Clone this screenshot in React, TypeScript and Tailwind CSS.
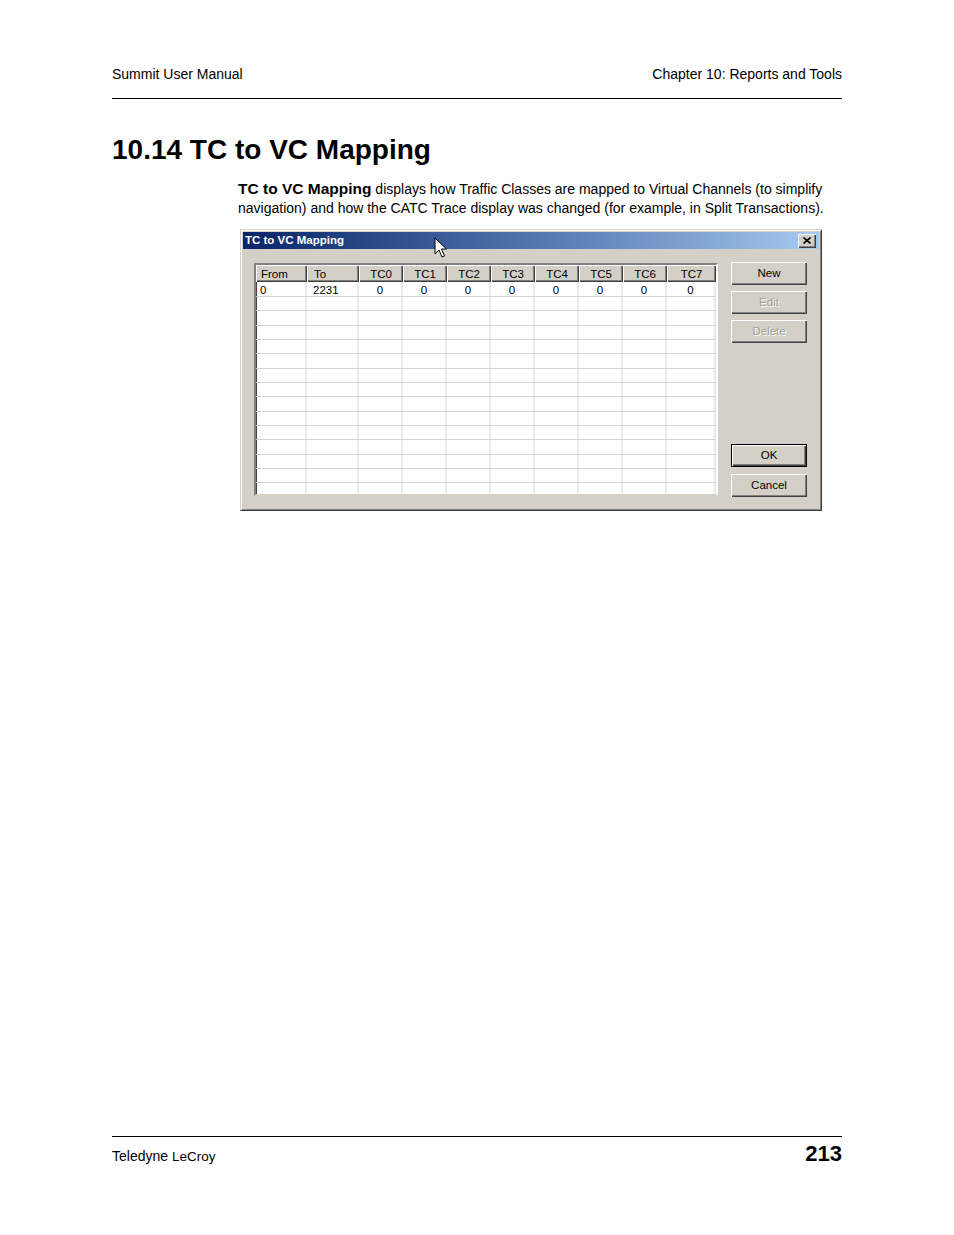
import React from "react";

const cols = [
  { label: "From", w: "w-[51px]", align: "text-left pl-[5px]", cell: "text-left pl-[4px]" },
  { label: "To", w: "w-[52px]", align: "text-left pl-[7px]", cell: "text-left pl-[6px]" },
  { label: "TC0", w: "w-[44px]", align: "text-center", cell: "text-center" },
  { label: "TC1", w: "w-[44px]", align: "text-center", cell: "text-center" },
  { label: "TC2", w: "w-[44px]", align: "text-center", cell: "text-center" },
  { label: "TC3", w: "w-[44px]", align: "text-center", cell: "text-center" },
  { label: "TC4", w: "w-[44px]", align: "text-center", cell: "text-center" },
  { label: "TC5", w: "w-[44px]", align: "text-center", cell: "text-center" },
  { label: "TC6", w: "w-[44px]", align: "text-center", cell: "text-center" },
  { label: "TC7", w: "w-[49px]", align: "text-center", cell: "text-center" },
];

const firstRow = ["0", "2231", "0", "0", "0", "0", "0", "0", "0", "0"];
const rows = Array.from({ length: 15 }, (_, i) => (i === 0 ? firstRow : firstRow.map(() => "")));

function WinButton({
  children,
  disabled,
  primary,
}: {
  children: React.ReactNode;
  disabled?: boolean;
  primary?: boolean;
}) {
  return (
    <div
      className={
        "h-[23px] w-[76px] bg-[#d4d0c8] flex items-center justify-center text-[11.5px] " +
        (primary
          ? "border border-black shadow-[inset_1px_1px_#fff,inset_-1px_-1px_#404040,inset_-2px_-2px_#808080]"
          : "shadow-[inset_1px_1px_#fff,inset_-1px_-1px_#404040,inset_-2px_-2px_#808080]") +
        (disabled ? " text-[#a09e98] [text-shadow:1px_1px_#fff]" : " text-black")
      }
    >
      {children}
    </div>
  );
}

function Cursor() {
  return (
    <svg
      className="absolute left-[191px] top-[5px]"
      width="14"
      height="22"
      viewBox="0 0 14 22"
    >
      <path
        d="M1 1 L1 17 L5 13 L8 20 L10.5 19 L7.5 12 L12.5 12 Z"
        fill="#fff"
        stroke="#000"
        strokeWidth="1"
        strokeLinejoin="miter"
      />
    </svg>
  );
}

function Dialog() {
  return (
    <div className="ml-[240px] w-[582px] h-[282px] bg-[#d4d0c8] border border-t-[#d4d0c8] border-l-[#d4d0c8] border-r-[#404040] border-b-[#404040] shadow-[inset_1px_1px_#fff,inset_-1px_-1px_#808080] p-[2px] flex flex-col font-['Liberation_Sans',Arial,sans-serif]">
      <div className="relative h-[17px] bg-gradient-to-r from-[#0a246a] to-[#a6caf0] flex items-center justify-between pl-[2px] pr-[3px]">
        <span className="text-white font-bold text-[11.5px] leading-none">TC to VC Mapping</span>
        <Cursor />
        <div className="w-[18px] h-[14px] bg-[#d4d0c8] shadow-[inset_1px_1px_#fff,inset_-1px_-1px_#404040,inset_-2px_-2px_#808080] flex items-center justify-center">
          <svg width="8" height="7" viewBox="0 0 8 7">
            <path d="M0.5 0.5 L7.5 6.5 M7.5 0.5 L0.5 6.5" stroke="#000" strokeWidth="1.6" />
          </svg>
        </div>
      </div>
      <div className="flex pl-[11px] pt-[14px]">
        <div className="w-[464px] h-[233px] bg-white border-2 border-t-[#808080] border-l-[#808080] border-r-white border-b-[#d4d0c8] shadow-[inset_1px_1px_#404040] overflow-hidden">
          <div className="flex h-[17px]">
            {cols.map((c) => (
              <div
                key={c.label}
                className={
                  c.w +
                  " " +
                  c.align +
                  " shrink-0 h-[17px] bg-[#d4d0c8] text-[11.5px] leading-[18px] text-black shadow-[inset_1px_1px_#fff,inset_-1px_-1px_#404040,inset_-2px_-2px_#808080]"
                }
              >
                {c.label}
              </div>
            ))}
          </div>
          {rows.map((r, i) => (
            <div
              key={i}
              className={
                (i === 0 ? "h-[15px]" : "h-[14.33px]") + " flex border-b border-[#d6d3cc]"
              }
            >
              {cols.map((c, j) => (
                <div
                  key={c.label}
                  className={
                    c.w +
                    " " +
                    c.cell +
                    " shrink-0 h-full border-r-2 border-[#ebe9e4] text-[11.5px] leading-[17px] text-black"
                  }
                >
                  {r[j]}
                </div>
              ))}
            </div>
          ))}
        </div>
        <div className="ml-[13px] -mt-[1px] h-[235px] flex flex-col">
          <WinButton>New</WinButton>
          <div className="mt-[6px]">
            <WinButton disabled>Edit</WinButton>
          </div>
          <div className="mt-[6px]">
            <WinButton disabled>Delete</WinButton>
          </div>
          <div className="flex-1" />
          <WinButton primary>OK</WinButton>
          <div className="mt-[7px]">
            <WinButton>Cancel</WinButton>
          </div>
        </div>
      </div>
    </div>
  );
}

export default function App() {
  return (
    <div className="w-[954px] h-[1235px] bg-white flex flex-col text-black font-['Liberation_Sans',Arial,sans-serif]">
      <div className="mx-[112px] pt-[66px] pb-[16px] border-b border-black flex justify-between text-[14px] leading-[16px]">
        <span>Summit User Manual</span>
        <span>Chapter 10: Reports and Tools</span>
      </div>
      <h1 className="ml-[112px] mt-[35px] text-[28px] leading-[32px] font-bold">10.14 TC to VC Mapping</h1>
      <p className="ml-[238px] mt-[13px] text-[14px] leading-[19px]">
        <span className="font-bold text-[15.5px]">TC to VC Mapping</span> displays how Traffic Classes are mapped to
        Virtual Channels (to simplify
        <br />
        navigation) and how the CATC Trace display was changed (for example, in Split Transactions).
      </p>
      <div className="mt-[11px]">
        <Dialog />
      </div>
      <div className="mt-auto mx-[112px] mb-[69px] border-t border-black pt-[5px] flex justify-between items-baseline">
        <span className="text-[14px] leading-[16px]">
          Teledyne <span className="text-[13.5px]">LeCroy</span>
        </span>
        <span className="text-[22px] leading-[24px] font-bold">213</span>
      </div>
    </div>
  );
}
